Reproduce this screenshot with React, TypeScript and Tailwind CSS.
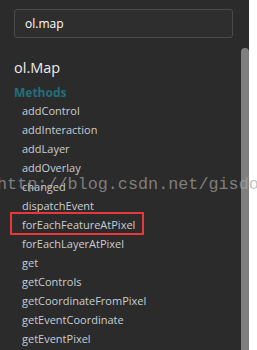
const methods = [
  "addControl",
  "addInteraction",
  "addLayer",
  "addOverlay",
  "changed",
  "dispatchEvent",
  "forEachFeatureAtPixel",
  "forEachLayerAtPixel",
  "get",
  "getControls",
  "getCoordinateFromPixel",
  "getEventCoordinate",
  "getEventPixel",
  "getInteractions",
];

export default function App() {
  return (
    <div
      className="relative flex h-[350px] w-[257px] overflow-hidden bg-white"
      style={{ fontFamily: '"Open Sans", "Noto Sans", sans-serif' }}
    >
      {/* sidebar */}
      <div className="flex h-full w-[241px] flex-col bg-[#2b2b2b] pt-[9px]">
        <div className="ml-[14px] flex h-[29px] w-[219px] items-center rounded-[3px] border border-[#4a4a4a] bg-[#2e2e2e] pl-[10px] text-[12px] leading-[27px] text-white">
          ol.map
        </div>
        <div className="ml-[14px] mt-5 text-[14.5px] leading-[20px] text-[#ededed]">ol.Map</div>
        <div className="ml-[14px] mt-[7px] text-[12px] font-bold leading-[16px] text-[#246f7c]">
          Methods
        </div>
        <ul className="ml-[22px] mt-0">
          {methods.map((m) => (
            <li key={m} className="relative text-[11px] leading-[19px] text-[#c8ced4]">
              {m === "forEachFeatureAtPixel" && (
                <span className="absolute left-[-12px] top-[-3px] h-[23px] w-[134px] border-[2px] border-[#e8383d]" />
              )}
              {m}
            </li>
          ))}
        </ul>
      </div>
      {/* scrollbar */}
      <div className="flex h-full w-[8px] flex-col bg-[#2b2b2b] pt-[48px]">
        <div className="flex-1 rounded-t-[4px] bg-[#7f7f7f]" />
      </div>
      {/* watermark */}
      <div
        className="pointer-events-none absolute left-[-3px] top-[175px] whitespace-nowrap text-[16.8px] leading-[20px] text-[rgba(165,165,165,0.7)]"
        style={{ fontFamily: '"Liberation Mono", monospace' }}
      >
        http://blog.csdn.net/gisdoc
      </div>
    </div>
  );
}
